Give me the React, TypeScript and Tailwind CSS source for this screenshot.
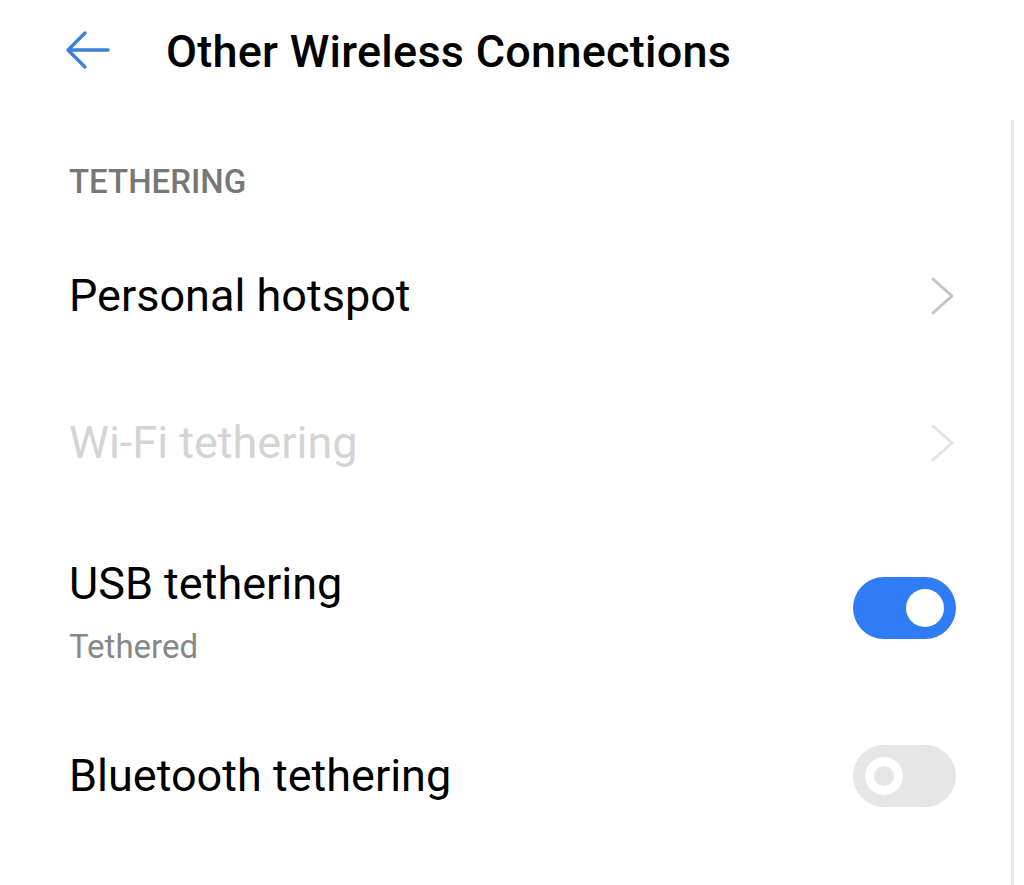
import React, { useState } from 'react';

const ArrowLeft = () => (
  <svg width="48" height="40" viewBox="0 0 48 40" fill="none" className="text-[#3d7fdc]">
    <path d="M44 20H4M21 3L4 20l17 17" stroke="currentColor" strokeWidth="3.4" strokeLinecap="round" strokeLinejoin="round" />
  </svg>
);

const Chevron: React.FC<{ faded?: boolean }> = ({ faded }) => (
  <svg width="26" height="40" viewBox="0 0 26 40" fill="none" className={faded ? 'text-[#e4e4e4]' : 'text-[#c4c4c4]'}>
    <path d="M3 3l19 17L3 37" stroke="currentColor" strokeWidth="3" strokeLinecap="round" strokeLinejoin="round" />
  </svg>
);

const Toggle: React.FC<{ on: boolean; onClick: () => void }> = ({ on, onClick }) => (
  <button
    type="button"
    role="switch"
    aria-checked={on}
    onClick={onClick}
    className={`flex h-[62px] w-[103px] items-center rounded-full px-[12px] ${on ? 'justify-end bg-[#2f7cf6]' : 'justify-start bg-[#e6e6e6]'}`}
  >
    {on ? (
      <span className="block h-[38px] w-[38px] rounded-full bg-white" />
    ) : (
      <span className="flex h-[38px] w-[38px] items-center justify-center rounded-full bg-white">
        <span className="block h-[20px] w-[20px] rounded-full bg-[#e6e6e6]" />
      </span>
    )}
  </button>
);

export default function App() {
  const [usb, setUsb] = useState(true);
  const [bt, setBt] = useState(false);

  return (
    <div className="flex h-[885px] w-[1024px] bg-white text-black" style={{ fontFamily: 'Roboto, "Noto Sans", sans-serif' }}>
      <div className="flex flex-1 flex-col">
        {/* Header */}
        <div className="flex h-[100px] items-center pl-[64px]">
          <ArrowLeft />
          <h1 className="ml-[54px] pt-[2px] text-[45px] font-medium leading-none tracking-[0.25px]">Other Wireless Connections</h1>
        </div>

        <div className="flex flex-col pl-[69px] pr-[55px]">
          {/* Section label */}
          <div className="pb-[24px] pt-[66px] text-[33px] font-medium leading-[32px] text-[#777777]">TETHERING</div>

          <div className="flex h-[148px] items-center justify-between">
            <span className="text-[45px] leading-[50px]">Personal hotspot</span>
            <Chevron />
          </div>

          <div className="flex h-[146px] items-center justify-between">
            <span className="text-[45px] leading-[50px] text-[#d4d4d4]">Wi-Fi tethering</span>
            <Chevron faded />
          </div>

          <div className="flex h-[184px] items-center justify-between">
            <div className="flex flex-col pt-[7px]">
              <span className="text-[45px] leading-[50px]">USB tethering</span>
              <span className="mt-[20px] text-[33px] leading-[36px] text-[#888888]">Tethered</span>
            </div>
            <Toggle on={usb} onClick={() => setUsb(!usb)} />
          </div>

          <div className="flex h-[152px] items-center justify-between">
            <span className="text-[45px] leading-[50px]">Bluetooth tethering</span>
            <Toggle on={bt} onClick={() => setBt(!bt)} />
          </div>
        </div>
      </div>
      {/* scroll indicator */}
      <div className="mr-[10px] mt-[120px] w-[3px] bg-[#e8e8e8]" />
    </div>
  );
}
